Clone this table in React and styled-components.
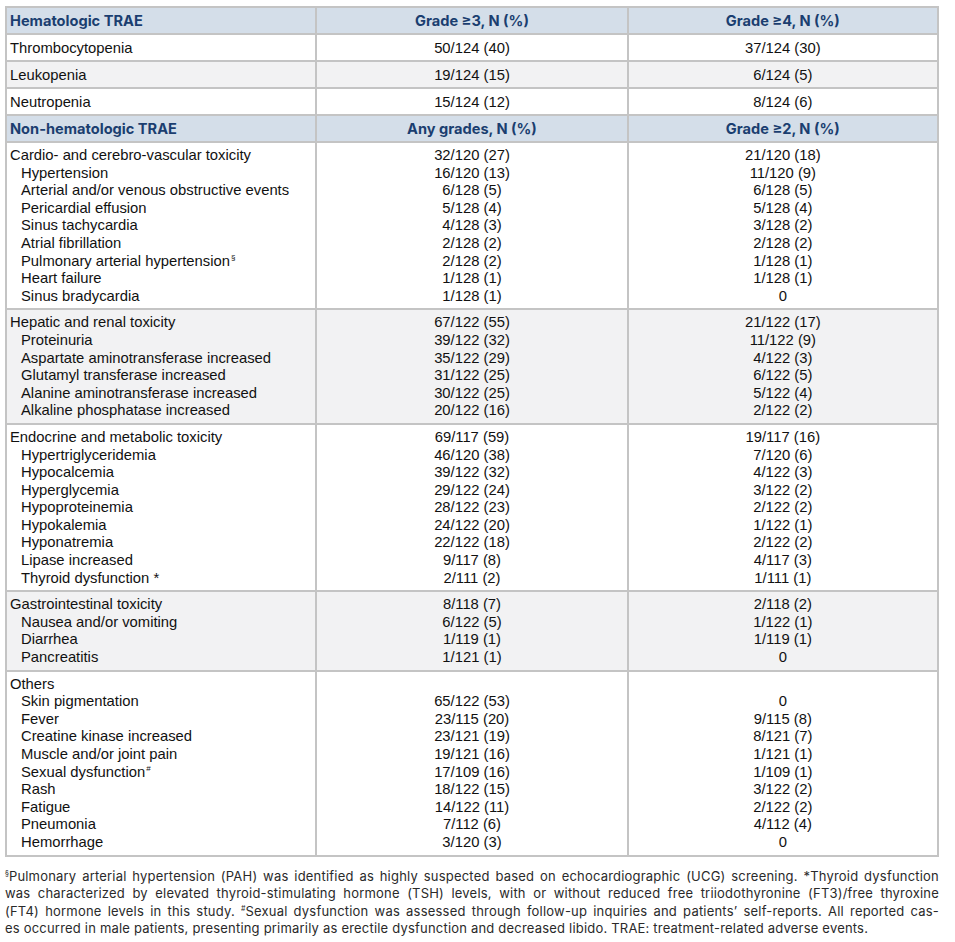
import React from "react";
import styled, { createGlobalStyle } from "styled-components";

const GlobalStyle = createGlobalStyle`
    body {
        margin: 0;
        background: #ffffff;
    }
`;

const hematologic = [
    ["Thrombocytopenia", "50/124 (40)", "37/124 (30)"],
    ["Leukopenia", "19/124 (15)", "6/124 (5)"],
    ["Neutropenia", "15/124 (12)", "8/124 (6)"],
];

const sections = [
    {
        rows: [
            ["Cardio- and cerebro-vascular toxicity", "32/120 (27)", "21/120 (18)"],
            ["Hypertension", "16/120 (13)", "11/120 (9)"],
            ["Arterial and/or venous obstructive events", "6/128 (5)", "6/128 (5)"],
            ["Pericardial effusion", "5/128 (4)", "5/128 (4)"],
            ["Sinus tachycardia", "4/128 (3)", "3/128 (2)"],
            ["Atrial fibrillation", "2/128 (2)", "2/128 (2)"],
            ["Pulmonary arterial hypertension", "2/128 (2)", "1/128 (1)", "§"],
            ["Heart failure", "1/128 (1)", "1/128 (1)"],
            ["Sinus bradycardia", "1/128 (1)", "0"],
        ],
    },
    {
        rows: [
            ["Hepatic and renal toxicity", "67/122 (55)", "21/122 (17)"],
            ["Proteinuria", "39/122 (32)", "11/122 (9)"],
            ["Aspartate aminotransferase increased", "35/122 (29)", "4/122 (3)"],
            ["Glutamyl transferase increased", "31/122 (25)", "6/122 (5)"],
            ["Alanine aminotransferase increased", "30/122 (25)", "5/122 (4)"],
            ["Alkaline phosphatase increased", "20/122 (16)", "2/122 (2)"],
        ],
    },
    {
        rows: [
            ["Endocrine and metabolic toxicity", "69/117 (59)", "19/117 (16)"],
            ["Hypertriglyceridemia", "46/120 (38)", "7/120 (6)"],
            ["Hypocalcemia", "39/122 (32)", "4/122 (3)"],
            ["Hyperglycemia", "29/122 (24)", "3/122 (2)"],
            ["Hypoproteinemia", "28/122 (23)", "2/122 (2)"],
            ["Hypokalemia", "24/122 (20)", "1/122 (1)"],
            ["Hyponatremia", "22/122 (18)", "2/122 (2)"],
            ["Lipase increased", "9/117 (8)", "4/117 (3)"],
            ["Thyroid dysfunction *", "2/111 (2)", "1/111 (1)"],
        ],
    },
    {
        rows: [
            ["Gastrointestinal toxicity", "8/118 (7)", "2/118 (2)"],
            ["Nausea and/or vomiting", "6/122 (5)", "1/122 (1)"],
            ["Diarrhea", "1/119 (1)", "1/119 (1)"],
            ["Pancreatitis", "1/121 (1)", "0"],
        ],
    },
    {
        rows: [
            ["Others", "", ""],
            ["Skin pigmentation", "65/122 (53)", "0"],
            ["Fever", "23/115 (20)", "9/115 (8)"],
            ["Creatine kinase increased", "23/121 (19)", "8/121 (7)"],
            ["Muscle and/or joint pain", "19/121 (16)", "1/121 (1)"],
            ["Sexual dysfunction", "17/109 (16)", "1/109 (1)", "#"],
            ["Rash", "18/122 (15)", "3/122 (2)"],
            ["Fatigue", "14/122 (11)", "2/122 (2)"],
            ["Pneumonia", "7/112 (6)", "4/112 (4)"],
            ["Hemorrhage", "3/120 (3)", "0"],
        ],
    },
];

const App = () => {
    return (
        <Page>
            <GlobalStyle />
            <Table>
                <colgroup>
                    <col style={{ width: "33.3%" }} />
                    <col style={{ width: "33.4%" }} />
                    <col style={{ width: "33.3%" }} />
                </colgroup>
                <tbody>
                    <HeadRow>
                        <HeadCell>Hematologic TRAE</HeadCell>
                        <HeadCell $center>Grade ≥3, N (%)</HeadCell>
                        <HeadCell $center>Grade ≥4, N (%)</HeadCell>
                    </HeadRow>
                    {hematologic.map((r, i) => (
                        <BodyRow key={r[0]} $shaded={i % 2 === 1}>
                            <Cell>{r[0]}</Cell>
                            <Cell $center>{r[1]}</Cell>
                            <Cell $center>{r[2]}</Cell>
                        </BodyRow>
                    ))}
                    <HeadRow>
                        <HeadCell>Non-hematologic TRAE</HeadCell>
                        <HeadCell $center>Any grades, N (%)</HeadCell>
                        <HeadCell $center>Grade ≥2, N (%)</HeadCell>
                    </HeadRow>
                    {sections.map((s, i) => (
                        <BodyRow key={i} $shaded={i % 2 === 1}>
                            <GroupCell>
                                {s.rows.map((r, j) => (
                                    <Line key={j} $sub={j > 0}>
                                        {r[0]}
                                        {r[3] ? <Mark>{r[3]}</Mark> : null}
                                    </Line>
                                ))}
                            </GroupCell>
                            <GroupCell $center>
                                {s.rows.map((r, j) => (
                                    <Line key={j}>{r[1] || "\u00a0"}</Line>
                                ))}
                            </GroupCell>
                            <GroupCell $center>
                                {s.rows.map((r, j) => (
                                    <Line key={j}>{r[2] || "\u00a0"}</Line>
                                ))}
                            </GroupCell>
                        </BodyRow>
                    ))}
                </tbody>
            </Table>
            <Notes>
                <NoteLine>
                    <NoteMark>§</NoteMark>Pulmonary arterial hypertension (PAH) was identified as highly suspected based on echocardiographic (UCG) screening. *Thyroid dysfunction
                </NoteLine>
                <NoteLine>
                    was characterized by elevated thyroid-stimulating hormone (TSH) levels, with or without reduced free triiodothyronine (FT3)/free thyroxine
                </NoteLine>
                <NoteLine>
                    (FT4) hormone levels in this study. <NoteMark>#</NoteMark>Sexual dysfunction was assessed through follow-up inquiries and patients’ self-reports. All reported cas-
                </NoteLine>
                <NoteLine $last>
                    es occurred in male patients, presenting primarily as erectile dysfunction and decreased libido. TRAE: treatment-related adverse events.
                </NoteLine>
            </Notes>
        </Page>
    );
};

const Page = styled.div`
    padding: 6px 16px 0 5px;
    width: 934px;
`;
const Table = styled.table`
    width: 934px;
    border-collapse: collapse;
    table-layout: fixed;
    border: 2px solid #c4c4c4;
    font-family: "Liberation Sans", Arial, sans-serif;
    font-size: 14.8px;
    color: #111111;
`;
const HeadRow = styled.tr`
    background-color: #d4dee9;
`;
const HeadCell = styled.td`
    border: 2px solid #c4c4c4;
    height: 22px;
    padding: 2px 3px 1px 3px;
    text-align: ${(p) => (p.$center ? "center" : "left")};
    font-family: Inter, "Open Sans", sans-serif;
    font-weight: 700;
    font-size: 14.6px;
    color: #1b3e70;
`;
const BodyRow = styled.tr`
    background-color: ${(p) => (p.$shaded ? "#f2f2f3" : "#ffffff")};
`;
const Cell = styled.td`
    border: 2px solid #c4c4c4;
    height: 22px;
    padding: 2px 3px 1px 3px;
    text-align: ${(p) => (p.$center ? "center" : "left")};
`;
const GroupCell = styled.td`
    border: 2px solid #c4c4c4;
    padding: 4px 3px 3px 3px;
    vertical-align: top;
    text-align: ${(p) => (p.$center ? "center" : "left")};
`;
const Line = styled.div`
    line-height: 17.6px;
    padding-left: ${(p) => (p.$sub ? "11px" : "0")};
    white-space: nowrap;
`;
const Mark = styled.sup`
    font-size: 8px;
    vertical-align: 6px;
    line-height: 0;
    margin-left: 1px;
`;
const Notes = styled.div`
    margin-top: 11px;
    font-family: Inter, "Open Sans", sans-serif;
    font-size: 13px;
    letter-spacing: 0.2px;
    color: #2a2a2a;
`;
const NoteLine = styled.div`
    line-height: 17.6px;
    text-align: justify;
    text-align-last: ${(p) => (p.$last ? "left" : "justify")};
    white-space: nowrap;
`;
const NoteMark = styled.sup`
    font-size: 7px;
    vertical-align: 5px;
    line-height: 0;
    letter-spacing: 0;
`;

export default App;
